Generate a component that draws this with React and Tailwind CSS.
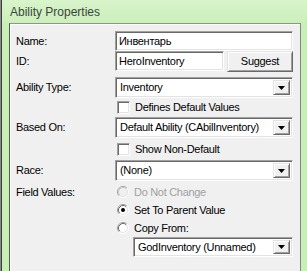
import React from 'react';

const sunken =
  'border border-t-[#a0a0a0] border-l-[#a0a0a0] border-r-white border-b-white shadow-[inset_1px_1px_0_#696969,inset_-1px_-1px_0_#e3e3e3]';
const raised =
  'border border-t-[#e3e3e3] border-l-[#e3e3e3] border-r-[#696969] border-b-[#696969] shadow-[inset_1px_1px_0_#ffffff,inset_-1px_-1px_0_#a0a0a0]';

const Label = ({ children }) => (
  <div className="w-[99px] shrink-0 text-[11px] text-black">{children}</div>
);

const TextBox = ({ value, className = '' }) => (
  <div className={`h-full bg-white flex items-center pl-[3px] ${sunken} ${className}`}>
    <span className="text-[11px] text-black whitespace-nowrap">{value}</span>
  </div>
);

const Select = ({ value, className = '' }) => (
  <div className={`h-full bg-white flex items-center p-[2px] ${sunken} ${className}`}>
    <span className="flex-1 pl-[2px] text-[11px] text-black whitespace-nowrap overflow-hidden">{value}</span>
    <div className={`w-[17px] h-full bg-[#f0f0f0] flex items-center justify-center ${raised}`}>
      <svg width="7" height="4" viewBox="0 0 7 4">
        <path d="M0 0h7L3.5 4z" fill="#000" />
      </svg>
    </div>
  </div>
);

const Checkbox = ({ label }) => (
  <div className="flex items-center h-[18px]">
    <div className={`w-[13px] h-[13px] bg-white ${sunken}`} />
    <span className="ml-[5px] text-[11px] text-black">{label}</span>
  </div>
);

const Radio = ({ label, checked, disabled }) => (
  <div className="flex items-center h-[18px]">
    <svg width="12" height="12" viewBox="0 0 12 12">
      <circle cx="6" cy="6" r="5" fill={disabled ? '#f0f0f0' : '#ffffff'} />
      <path d="M2.11 9.89A5.5 5.5 0 0 1 9.89 2.11" fill="none" stroke="#a0a0a0" strokeWidth="1" />
      <path d="M9.89 2.11A5.5 5.5 0 0 1 2.11 9.89" fill="none" stroke="#ffffff" strokeWidth="1" />
      <path d="M2.82 9.18A4.5 4.5 0 0 1 9.18 2.82" fill="none" stroke={disabled ? '#c8c8c8' : '#696969'} strokeWidth="1" />
      <path d="M9.18 2.82A4.5 4.5 0 0 1 2.82 9.18" fill="none" stroke="#e3e3e3" strokeWidth="1" />
      {checked && <circle cx="6" cy="6" r="2" fill="#000" />}
    </svg>
    <span className={`ml-[5px] text-[11px] ${disabled ? 'text-[#a0a0a0]' : 'text-black'}`}>{label}</span>
  </div>
);

export default function App() {
  return (
    <div className="w-[307px] h-[271px] overflow-hidden flex bg-[#c9efb8] font-['Liberation_Sans',Arial,sans-serif] tracking-[-0.3px]">
      {/* window edge */}
      <div className="w-[2px] shrink-0 bg-[#3a3f3a] border-l border-[#8a8a8a]" />

      <div className="flex-1 flex flex-col">
        {/* header */}
        <div className="h-[23px] shrink-0 flex items-center pl-[8px] bg-linear-to-b from-[#d8f4cb] to-[#cbefba]">
          <span className="text-[12px] tracking-normal text-[#3b463b]">Ability Properties</span>
        </div>

        {/* panel */}
        <div className="ml-[7px] w-[292px] flex-1 bg-[#f0f0f0] border-l border-t border-r border-l-[#4f5d4f] border-t-[#8c968c] border-r-[#7c8c7c] shadow-[inset_1px_1px_0_#ffffff] pl-[6px]">
          <div className="flex items-center h-[20px] mt-[7px]">
            <Label>Name:</Label>
            <TextBox value="Инвентарь" className="w-[178px]" />
          </div>

          <div className="flex items-center h-[20px]">
            <Label>ID:</Label>
            <TextBox value="HeroInventory" className="w-[109px]" />
            <div className={`ml-[3px] w-[66px] h-[21px] bg-[#f0f0f0] flex items-center justify-center text-[11px] text-black ${raised}`}>
              Suggest
            </div>
          </div>

          <div className="flex items-center h-[21px] mt-[6px]">
            <Label>Ability Type:</Label>
            <Select value="Inventory" className="w-[178px]" />
          </div>

          <div className="flex items-center">
            <div className="w-[101px] shrink-0" />
            <Checkbox label="Defines Default Values" />
          </div>

          <div className="flex items-center h-[21px] mt-[1px]">
            <Label>Based On:</Label>
            <Select value="Default Ability (CAbilInventory)" className="w-[178px]" />
          </div>

          <div className="flex items-center mt-[2px]">
            <div className="w-[101px] shrink-0" />
            <Checkbox label="Show Non-Default" />
          </div>

          <div className="flex items-center h-[21px] mt-[2px]">
            <Label>Race:</Label>
            <Select value="(None)" className="w-[178px]" />
          </div>

          <div className="flex mt-[2px]">
            <div className="w-[101px] shrink-0 h-[18px] flex items-center">
              <span className="text-[11px] text-black">Field Values:</span>
            </div>
            <div className="flex flex-col">
              <Radio label="Do Not Change" disabled />
              <Radio label="Set To Parent Value" checked />
              <Radio label="Copy From:" />
              <div className="h-[20px] ml-[16px] w-[160px]">
                <Select value="GodInventory (Unnamed)" className="w-[160px]" />
              </div>
            </div>
          </div>
        </div>
      </div>
    </div>
  );
}
